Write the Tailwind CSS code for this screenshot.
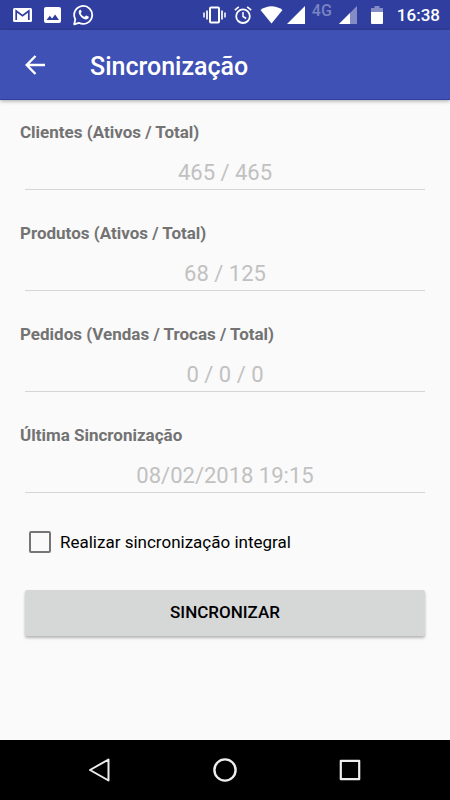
<!DOCTYPE html>
<html lang="pt-BR">
<head>
<meta charset="utf-8">
<meta name="viewport" content="width=device-width, initial-scale=1">
<title>Sincronização</title>
<script src="https://cdn.jsdelivr.net/npm/@tailwindcss/browser@4"></script>
</head>
<body class="flex min-h-screen flex-col bg-[#fafafa] font-['Roboto','Noto_Sans',sans-serif] text-black">
  <!-- Status bar -->
  <div class="flex h-[30px] items-center justify-between bg-[#303f9f] pr-[10px] pl-[13px] text-white">
    <div class="flex items-center gap-3">
      <svg class="h-[14px] w-[19px]" viewBox="0 0 19 14" aria-label="Gmail"><rect width="19" height="14" rx="1.5" fill="#fff"/><path d="M3.2 12V3l6.300 4.600L15.800 3v9" fill="none" stroke="#303f9f" stroke-width="1.700"/></svg>
      <svg class="h-4 w-[17px]" viewBox="0 0 17 16" aria-label="Imagem"><rect width="17" height="16" rx="2" fill="#fff"/><path d="M2.500 13l3.300-4.200 2.300 2.700 3-4 3.900 5.500z" fill="#303f9f"/></svg>
      <svg class="h-[22px] w-[21px]" viewBox="0 0 21 22" aria-label="WhatsApp"><path d="M2.300 15.200A9 9 0 1 1 5.900 18.800L1.200 20.300z" fill="none" stroke="#fff" stroke-width="1.800" stroke-linejoin="round"/><path d="M7.200 5.700c-.5 0-1.600 1-1.500 2.500.2 3.100 4 7 7.500 7.200 1.500 0 2.500-1 2.600-2.300 0-.3-.1-.5-.4-.6l-2-1c-.3-.1-.5 0-.7.2l-.8 1c-.2.2-.4.200-.6.1-1.700-.8-2.800-2-3.500-3.400-.1-.2 0-.4.1-.5l.7-.8c.1-.2.1-.4.100-.6l-.9-1.500c-.1-.3-.3-.3-.6-.3z" fill="#fff"/></svg>
    </div>
    <div class="flex items-center">
      <svg class="mr-2 h-[18px] w-[23px]" viewBox="0 0 23 18" fill="none" stroke="#fff" aria-label="Vibrar"><rect x="7" y="1.500" width="9" height="15" rx="1" stroke-width="2"/><path d="M4 4.500v9M19 4.500v9" stroke-width="1.700"/><path d="M1 6.500v5M22 6.500v5" stroke-width="1.500"/></svg>
      <svg class="mr-2 h-[18px] w-[18px]" viewBox="0 0 18 18" fill="none" stroke="#fff" aria-label="Alarme"><circle cx="9" cy="10.200" r="6.800" stroke-width="1.800"/><path d="M.8 4.200l4-3.300M17.200 4.200l-4-3.300" stroke-width="1.700"/><path d="M9 6v4.500l3.200 2" stroke-width="1.500"/></svg>
      <svg class="mr-1 h-[18px] w-[23px]" viewBox="0 0 23 18" aria-label="Wi-Fi"><path d="M.5 4Q11.500-3.500 22.500 4L11.500 17.600z" fill="#fff"/></svg>
      <svg class="mr-[7px] h-[18px] w-[18px]" viewBox="0 0 18 18" aria-label="Sinal"><path d="M18 0v18H0z" fill="#fff"/></svg>
      <span class="mr-[7px] mb-2 text-base leading-4 font-medium text-[#7983c1]">4G</span>
      <svg class="mr-[14px] h-[18px] w-[18px]" viewBox="0 0 18 18" aria-label="Sinal"><path d="M18 0v18H0z" fill="#838cc5"/><path d="M11 7v11H0z" fill="#fff"/></svg>
      <svg class="mr-[14px] h-[18px] w-[12px]" viewBox="0 0 12 18" aria-label="Bateria"><path d="M3.500 0h5v2H12v4H0V2h3.500z" fill="#838cc5"/><path d="M0 6h12v11a1 1 0 0 1-1 1H1a1 1 0 0 1-1-1z" fill="#fff"/></svg>
      <span class="text-[17px] leading-5 font-medium">16:38</span>
    </div>
  </div>

  <!-- App bar -->
  <header class="flex h-[70px] items-center border-b border-[#303f9f] bg-[#3f51b5] pl-5 text-white shadow-[0_1px_4px_rgba(0,0,0,0.35)]">
    <button type="button" class="mr-10 flex size-[30px] items-center justify-center" aria-label="Voltar">
      <svg class="size-5" viewBox="0 0 20 20" fill="none" stroke="#fff" stroke-width="2.400"><path d="M10.500 1L1.700 10l8.800 9M1.700 10H20"/></svg>
    </button>
    <h1 class="pt-1 text-[25px] leading-8 font-medium">Sincronização</h1>
  </header>

  <main class="flex-1 px-5 pt-5">
    <form>
      <div class="mb-[31px]">
        <label for="clientes" class="block text-[17px] leading-6 font-bold text-[#737373]">Clientes (Ativos / Total)</label>
        <div class="px-[5px]"><input id="clientes" type="text" disabled value="465 / 465" class="h-[46px] w-full border-b border-[#d5d5d5] pt-4 pb-1 text-center text-[22px] text-[#c1c1c1]"></div>
      </div>
      <div class="mb-[31px]">
        <label for="produtos" class="block text-[17px] leading-6 font-bold text-[#737373]">Produtos (Ativos / Total)</label>
        <div class="px-[5px]"><input id="produtos" type="text" disabled value="68 / 125" class="h-[46px] w-full border-b border-[#d5d5d5] pt-4 pb-1 text-center text-[22px] text-[#c1c1c1]"></div>
      </div>
      <div class="mb-[31px]">
        <label for="pedidos" class="block text-[17px] leading-6 font-bold text-[#737373]">Pedidos (Vendas / Trocas / Total)</label>
        <div class="px-[5px]"><input id="pedidos" type="text" disabled value="0 / 0 / 0" class="h-[46px] w-full border-b border-[#d5d5d5] pt-4 pb-1 text-center text-[22px] text-[#c1c1c1]"></div>
      </div>
      <div class="mb-[31px]">
        <label for="ultima" class="block text-[17px] leading-6 font-bold text-[#737373]">Última Sincronização</label>
        <div class="px-[5px]"><input id="ultima" type="text" disabled value="08/02/2018 19:15" class="h-[46px] w-full border-b border-[#d5d5d5] pt-4 pb-1 text-center text-[22px] text-[#c1c1c1]"></div>
      </div>
      <div class="flex h-9 items-center gap-[9px] pl-[9px]">
        <input id="integral" type="checkbox" class="size-[22px] appearance-none rounded-[2px] border-2 border-[#757575] checked:bg-[#3f51b5]">
        <label for="integral" class="text-[17px] leading-6">Realizar sincronização integral</label>
      </div>
      <div class="px-[5px] pt-[30px]">
        <button type="button" class="h-[46px] w-full rounded-[2px] bg-[#d6d7d7] text-[17px] font-medium shadow-[0_2px_3px_rgba(0,0,0,0.28)]">SINCRONIZAR</button>
      </div>
    </form>
  </main>

  <!-- System navigation -->
  <nav class="flex h-[60px] items-center justify-center gap-[101px] bg-black" aria-label="Navegação do sistema">
    <button type="button" aria-label="Voltar"><svg class="size-6" viewBox="0 0 24 24" fill="none" stroke="#eee" stroke-width="2" stroke-linejoin="round"><path d="M20.500 1.500v21L2 12z"/></svg></button>
    <button type="button" aria-label="Início"><svg class="size-6" viewBox="0 0 24 24" fill="none" stroke="#eee" stroke-width="2.400"><circle cx="12" cy="12" r="10.600"/></svg></button>
    <button type="button" aria-label="Recentes"><svg class="size-6" viewBox="0 0 24 24" fill="none" stroke="#eee" stroke-width="2.200" stroke-linejoin="round"><rect x="2.800" y="2.800" width="18.400" height="18.400"/></svg></button>
  </nav>
</body>
</html>
